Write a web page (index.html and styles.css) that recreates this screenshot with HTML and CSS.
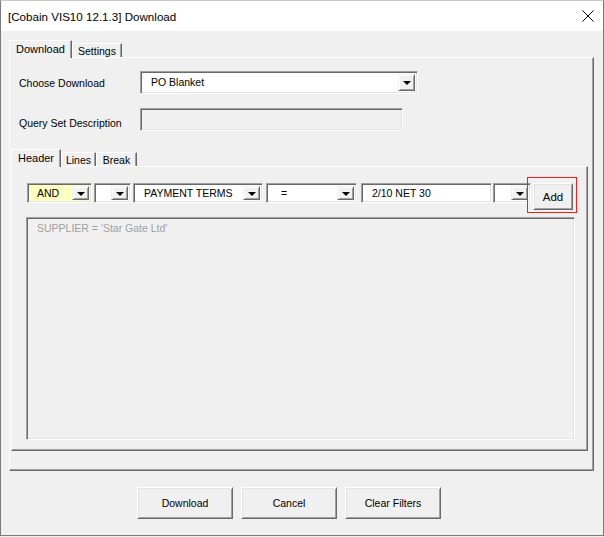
FILE: index.html
```html
<!DOCTYPE html>
<html>
  <head>
    <title>Download</title>
    <link rel="stylesheet" href="styles.css">
  </head>
  <body>
    <div class="window">
      <div class="titlebar">
        <span class="title">[Cobain VIS10 12.1.3] Download</span>
        <svg class="close" width="12" height="12" viewBox="0 0 12 12">
          <path d="M0.5 0.5 L11.5 11.5 M11.5 0.5 L0.5 11.5" stroke="#000" stroke-width="1" fill="none"/>
        </svg>
      </div>
      <div class="content">
        <!-- outer tabs -->
        <div class="tabs">
          <div class="tab tab-dl selected">Download</div>
          <div class="tab tab-set">Settings</div>
        </div>
        <div class="panel">
          <div class="row row-first">
            <div class="label">Choose Download</div>
            <div class="combo combo-dl">
              <span class="combo-text">PO Blanket</span>
              <span class="drop"><span class="arrow"></span></span>
            </div>
          </div>
          <div class="row row-second">
            <div class="label label-low">Query Set Description</div>
            <div class="textbox"></div>
          </div>

          <!-- inner tabs -->
          <div class="tabs inner-tabs">
            <div class="tab tab-head selected">Header</div>
            <div class="tab tab-lines">Lines</div>
            <div class="tab tab-break">Break</div>
          </div>
          <div class="inner-panel">
            <div class="filter-row">
              <div class="combo c-and">
                <span class="combo-text">AND</span>
                <span class="drop"><span class="arrow"></span></span>
              </div>
              <div class="combo c-paren">
                <span class="combo-text"></span>
                <span class="drop"><span class="arrow"></span></span>
              </div>
              <div class="combo c-field">
                <span class="combo-text">PAYMENT TERMS</span>
                <span class="drop"><span class="arrow"></span></span>
              </div>
              <div class="combo c-op">
                <span class="combo-text">=</span>
                <span class="drop"><span class="arrow"></span></span>
              </div>
              <div class="field c-value"><span class="combo-text">2/10 NET 30</span></div>
              <div class="combo c-close">
                <span class="combo-text"></span>
                <span class="drop"><span class="arrow"></span></span>
              </div>
              <div class="add-wrap">
                <button class="btn btn-add">Add</button>
                <div class="highlight"></div>
              </div>
            </div>
            <div class="listbox">
              <div class="list-item">SUPPLIER = 'Star Gate Ltd'</div>
            </div>
          </div>
        </div>

        <div class="buttons">
          <button class="btn btn-main">Download</button>
          <button class="btn btn-main">Cancel</button>
          <button class="btn btn-main">Clear Filters</button>
        </div>
      </div>
    </div>
  </body>
</html>
```

FILE: styles.css
```css
html, body {
  margin: 0;
  padding: 0;
  background: #f0f0f0;
}
body {
  font-family: "Liberation Sans", Arial, sans-serif;
  font-size: 10.5px;
  color: #000;
}
.window {
  width: 604px; height: 536px;
  box-sizing: border-box;
  border: 1px solid #7a7a7a;
  border-top-color: #c8c8c8;
  background: #f0f0f0;
  display: flex; flex-direction: column;
}
.titlebar {
  height: 30px;
  background: #fff;
  display: flex; align-items: center;
  padding: 0 9px 0 7px;
}
.title {
  font-size: 11.6px;
  flex: 1;
}
.content {
  flex: 1;
  padding: 9px 9px 0 8px;
}

/* tabs */
.tabs {
  display: flex; align-items: flex-end;
  height: 17px;
  position: relative; z-index: 1;
}
.tab {
  box-sizing: border-box;
  height: 14px;
  background: #f0f0f0;
  border-top: 1px solid #fff;
  border-left: 1px solid #fff;
  border-right: 1px solid #696969;
  box-shadow: inset -1px 0 #a0a0a0;
  padding-top: 1px;
  text-align: center;
  line-height: 12px;
}
.tab.selected {
  height: 18px;
  margin-bottom: -1px;
  line-height: 14px;
  padding-top: 1px;
  font-size: 11px;
}
.tab-dl { width: 63px; }
.tab-set { width: 50px; }
.tab-head { width: 50px; }
.tab-lines { width: 35px; }
.tab-break { width: 41px; }

.panel {
  box-sizing: border-box;
  height: 414px;
  border-top: 1px solid #fff;
  border-left: 1px solid #fff;
  border-right: 1px solid #696969;
  border-bottom: 1px solid #696969;
  box-shadow: inset -1px -1px #a0a0a0;
  padding: 13px 5px 0 1px;
}
.row {
  display: flex; align-items: center;
  padding-left: 8px;
}
.row-second { margin-top: 14px; }
.label {
  width: 121px;
}
.label-low { padding-top: 6px; }

/* sunken fields */
.combo, .field, .textbox, .listbox {
  box-sizing: border-box;
  border: 1px solid;
  border-color: #a0a0a0 #fff #fff #a0a0a0;
  box-shadow: inset 1px 1px #696969, inset -1px -1px #e3e3e3;
}
.combo, .field {
  display: flex; align-items: stretch;
  background: #fff;
  height: 20px;
}
.combo-text {
  flex: 1;
  padding-left: 9px;
  line-height: 19px;
  white-space: nowrap; overflow: hidden;
}
.drop {
  width: 17px;
  margin: 2px 2px 2px 0;
  box-sizing: border-box;
  background: #f0f0f0;
  border: 1px solid;
  border-color: #f0f0f0 #696969 #696969 #f0f0f0;
  box-shadow: inset 1px 1px #fff, inset -1px -1px #a0a0a0;
  display: flex; align-items: center; justify-content: center;
}
.arrow {
  width: 0; height: 0;
  border-left: 4px solid transparent;
  border-right: 4px solid transparent;
  border-top: 4px solid #000;
  margin-top: 1px;
}
.combo-dl {
  width: 278px; height: 23px;
}
.combo-dl .combo-text { padding-left: 10px; line-height: 20px; }
.textbox {
  width: 263px; height: 23px;
  background: #f0f0f0;
}

/* inner tab control */
.inner-tabs {
  margin-top: 18px;
}
.inner-panel {
  box-sizing: border-box;
  height: 285px;
  border-top: 1px solid #fff;
  border-left: 1px solid #fff;
  border-right: 1px solid #696969;
  border-bottom: 1px solid #696969;
  box-shadow: inset -1px -1px #a0a0a0;
  padding: 16px 0 0 15px;
}
.filter-row {
  display: flex; align-items: flex-start;
}
.c-and { width: 65px; background: #ffffc0; }
.c-paren { width: 37px; margin-left: 2px; }
.c-field { width: 130px; margin-left: 2px; }
.c-field .combo-text { padding-left: 10px; }
.c-op { width: 91px; margin-left: 3px; }
.c-op .combo-text { padding-left: 14px; }
.c-value { width: 131px; margin-left: 4px; }
.c-value .combo-text { padding-left: 10px; }
.c-close { width: 38px; margin-left: 1px; }

.add-wrap {
  position: relative;
  margin-left: 2px;
}
.highlight {
  position: absolute;
  left: -6px; top: -6px;
  width: 50px; height: 36px;
  box-sizing: border-box;
  border: 1px solid #ff1a1a;
}

/* raised buttons */
.btn {
  box-sizing: border-box;
  font-family: "Liberation Sans", Arial, sans-serif;
  font-size: 10.5px;
  color: #000;
  background: #f0f0f0;
  border: 1px solid;
  border-color: #fff #696969 #696969 #fff;
  box-shadow: inset 1px 1px #e3e3e3, inset -1px -1px #a0a0a0;
  padding: 0;
  margin: 0;
}
.btn-add {
  width: 40px; height: 27px;
  font-size: 11.5px;
}

.listbox {
  width: 549px; height: 223px;
  margin: 7px 0 0 -1px;
  background: #f0f0f0;
}
.list-item {
  color: #a0a0a0;
  padding: 4px 0 0 10px;
}

.buttons {
  display: flex; gap: 8px;
  margin-top: 16px;
  padding-left: 128px;
}
.btn-main {
  width: 96px; height: 32px;
}
```
